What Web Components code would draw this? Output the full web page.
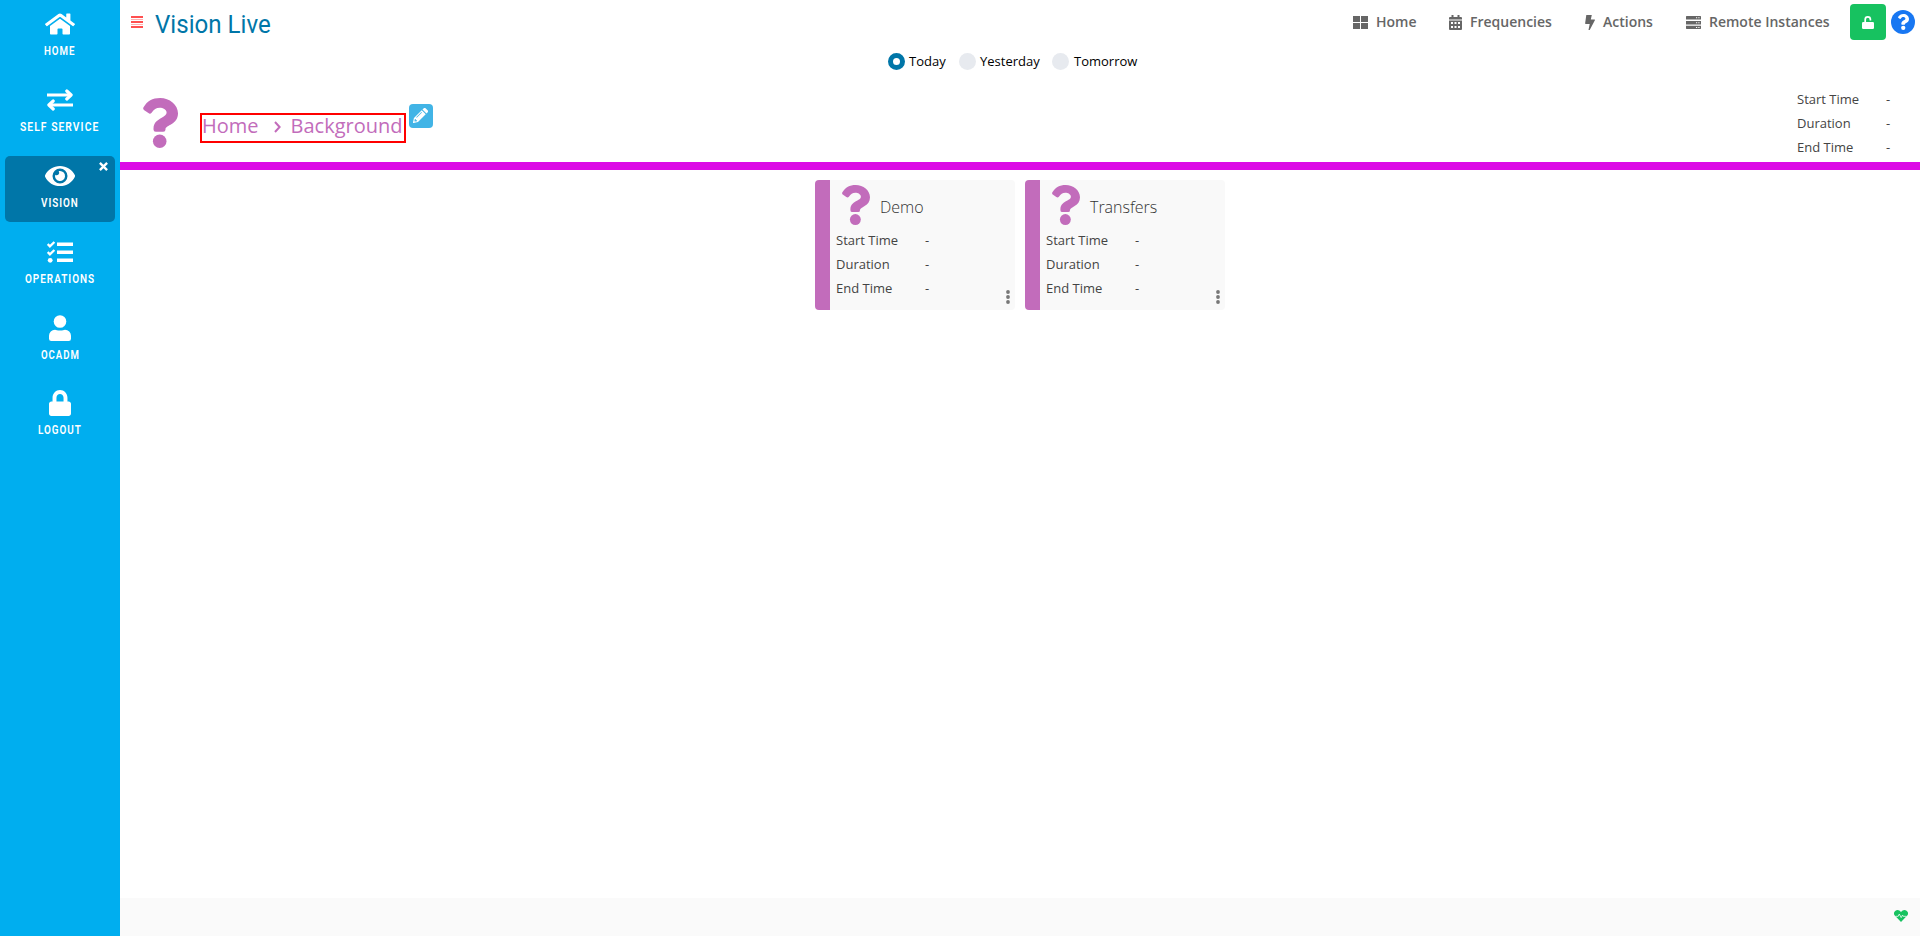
<!DOCTYPE html>
<html lang="en"><head><meta charset="utf-8"><title>Vision Live</title>
<style>html,body{margin:0;height:100%;overflow:hidden;background:#fff;font-family:"Open Sans",sans-serif}</style></head>
<body><app-shell></app-shell>
<script>
const ICONS = {
 home:['0 0 576 512','<path d="M280.37 148.26L96 300.11V464a16 16 0 0 0 16 16l112.06-.29a16 16 0 0 0 15.92-16V368a16 16 0 0 1 16-16h64a16 16 0 0 1 16 16v95.64a16 16 0 0 0 16 16.05L464 480a16 16 0 0 0 16-16V300L295.67 148.26a12.19 12.19 0 0 0-15.3 0zM571.6 251.47L488 182.56V44.05a12 12 0 0 0-12-12h-56a12 12 0 0 0-12 12v72.61L318.47 43a48 48 0 0 0-61 0L4.34 251.47a12 12 0 0 0-1.6 16.9l25.5 31A12 12 0 0 0 45.15 301l235.22-193.74a12.19 12.19 0 0 1 15.3 0L530.9 301a12 12 0 0 0 16.9-1.6l25.5-31a12 12 0 0 0-1.7-16.93z"/>'],
 swap:['0 0 26 22','<path fill="none" stroke="currentColor" stroke-width="3.2" d="M0 6h24M26 16H2"/><path fill="none" stroke="currentColor" stroke-width="3.2" stroke-linecap="round" stroke-linejoin="round" d="M19.8 2l4.3 4-4.3 4M6.2 12l-4.3 4 4.3 4"/>'],
 eye:['0 0 30 20','<path fill-rule="evenodd" d="M15 0C8.5 0 3 3.500.2 9.100a2 2 0 0 0 0 1.800C3 16.500 8.500 20 15 20s12-3.500 14.800-9.100a2 2 0 0 0 0-1.800C27 3.500 21.500 0 15 0zm0 2.500a7.500 7.500 0 1 1 0 15 7.500 7.500 0 0 1 0-15z"/><path d="M15 5c-.5 0-.9.050-1.300.2a2.500 2.500 0 0 1-3.500 3.500A5 5 0 1 0 15 5z"/>'],
 list:['0 0 26 22','<path d="M10 1.600h16v3.400H10zM10 9.600h16v3.400H10zM10 17.600h16V21H10z"/><circle cx="3.200" cy="19.300" r="2.400"/><path fill="none" stroke="currentColor" stroke-width="2.300" d="M.7 3.100l2.200 2.200L7.400 1M.7 11.100l2.200 2.200L7.400 9"/>'],
 user:['0 0 22 26','<circle cx="11" cy="6.500" r="6.300"/><path d="M6 14.700c1.500 0 2 .8 5 .8s3.500-.8 5-.8a6 6 0 0 1 6 6v3a2.300 2.300 0 0 1-2.300 2.300H2.300A2.300 2.300 0 0 1 0 23.700v-3a6 6 0 0 1 6-6z"/>'],
 lock:['0 0 448 512','<path d="M400 224h-24v-72C376 68.200 307.800 0 224 0S72 68.200 72 152v72H48c-26.500 0-48 21.500-48 48v192c0 26.500 21.500 48 48 48h352c26.500 0 48-21.500 48-48V272c0-26.500-21.500-48-48-48zm-104 0H152v-72c0-39.700 32.300-72 72-72s72 32.300 72 72v72z"/>'],
 close:['0 0 10 10','<path fill="none" stroke="currentColor" stroke-width="2.600" d="M1 1l8 8M9 1l-8 8"/>'],
 menu:['0 0 12 12','<path d="M0 0h12v2H0zM0 5h12v2H0zM0 10h12v2H0z"/><path opacity=".45" d="M0 3h12v1H0zM0 8h12v1H0z"/>'],
 grid:['0 0 15 13','<path d="M0 0h7v6H0zM8 0h7v6H8zM0 7h7v6H0zM8 7h7v6H8z"/>'],
 cal:['0 0 13 15','<path fill-rule="evenodd" d="M2.500 0h2v2h4V0h2v2H12a1 1 0 0 1 1 1v1.500H0V3a1 1 0 0 1 1-1h1.500zM0 5.500h13V14a1 1 0 0 1-1 1H1a1 1 0 0 1-1-1zM2 7v2h2V7zm3.500 0v2h2V7zM9 7v2h2V7zM2 11v2h2v-2zm3.500 0v2h2v-2zM9 11v2h2v-2z"/>'],
 bolt:['0 0 10 15','<path d="M1.300 0h5.500l-1 4.500H9.500a.5.500 0 0 1 .4.800L4.700 15H3.500l1.200-6H.6L.1 8.400z"/>'],
 server:['0 0 15 13','<path fill-rule="evenodd" d="M.5 0h14l.5.500v3H0V.5zM0 5h15v3.500H0zM0 9.800h15v2.700l-.5.500H.5l-.5-.5zM10 1.200v1h1.200v-1zm2.300 0v1h1.200v-1zM10 6.200v1h1.200v-1zm2.300 0v1h1.200v-1zM10 11v1h1.200v-1zm2.300 0v1h1.200v-1z"/>'],
 unlock:['0 0 12 13','<path fill="none" stroke="currentColor" stroke-width="1.700" d="M3.200 7V3.500a2.600 2.600 0 0 1 5.200 0v1"/><path d="M1.200 6h9.600A1.200 1.200 0 0 1 12 7.200v4.600a1.200 1.200 0 0 1-1.200 1.200H1.200A1.200 1.200 0 0 1 0 11.800V7.200A1.200 1.200 0 0 1 1.200 6z"/>'],
 q:['0 0 35 50','<path d="M.7 8.900C4.300 3.200 9.300 0 17.200 0 26.500 0 35 6.600 35 15.300c0 11.500-12.500 11.800-12.500 16v.2a2.300 2.300 0 0 1-2.300 2.300h-7.400a2.300 2.300 0 0 1-2.300-2.300V30.400c0-6.200 4.700-8.700 8.200-10.700 3-1.700 4.900-2.900 4.900-5.100 0-3-3.800-4.900-6.800-4.900-3.900 0-5.700 1.800-8.200 5a2.300 2.300 0 0 1-3.200.4L.9 11.900a2.300 2.300 0 0 1-.2-3z"/><circle cx="16.700" cy="43.200" r="6.800"/>'],
 chev:['0 0 7 12','<path fill="none" stroke="currentColor" stroke-width="2" d="M1 1l4.600 5L1 11"/>'],
 pencil:['0 0 16 16','<path fill-rule="evenodd" d="M9.300 2.400l4.300 4.300-8.300 8.300L.6 15.900a.5.500 0 0 1-.6-.6L1 10.700zM10.100 1.600L11.200.5a1.800 1.800 0 0 1 2.500 0l1.800 1.800a1.800 1.800 0 0 1 0 2.500L14.400 5.900zM9 4.300L3.400 9.900l.6.600L9.600 4.900zM2 11.700L1.500 14l.5.500 2.300-.5v-1H3v-1.300z"/>'],
 dots:['0 0 4 14','<circle cx="2" cy="2" r="1.900"/><circle cx="2" cy="7" r="1.900"/><circle cx="2" cy="12" r="1.900"/>'],
 heart:['0 0 14 12','<path d="M7 12L1 5.800A3.600 3.600 0 0 1 1.500.7C3.400-.6 5.600.2 7 2 8.400.2 10.600-.6 12.500.7A3.600 3.600 0 0 1 13 5.800z"/><path fill="none" stroke="#fafafa" stroke-width=".8" d="M1.500 6.300h2.700L5.300 4 7.200 7.600l1.300-2.500.7 1.200h3.300"/>']
};
class UiIcon extends HTMLElement{connectedCallback(){const [v,p]=ICONS[this.getAttribute('name')];
 this.attachShadow({mode:'open'}).innerHTML=`<style>:host{display:block;flex:none}svg{display:block;width:100%;height:100%}</style><svg viewBox="${v}" preserveAspectRatio="none" fill="currentColor">${p}</svg>`}}
customElements.define('ui-icon',UiIcon);
/* Condensed label: squeezes its text horizontally to the given width. */
class FitText extends HTMLElement{connectedCallback(){
 this.attachShadow({mode:'open'}).innerHTML=`<style>:host{display:block;white-space:nowrap;font-family:Roboto,sans-serif}span{display:inline-block;transform-origin:0 50%}</style><span><slot></slot></span>`;
 const w=+this.getAttribute('width'),s=this.shadowRoot.querySelector('span');this.style.width=w+'px';
 s.style.transform=`scaleX(${w/(s.offsetWidth-(parseFloat(getComputedStyle(this).letterSpacing)||0))})`}}
class NavItem extends HTMLElement{connectedCallback(){const g=n=>this.getAttribute(n);
 this.attachShadow({mode:'open'}).innerHTML=`<style>:host{display:flex;flex-direction:column;align-items:center;position:relative;height:66px;margin:0 5px;border-radius:5px;color:#fff}
 :host([active]){background:#0076a8}.i{height:40px;display:flex;align-items:center}fit-text{font-size:13px;font-weight:600;line-height:15px;letter-spacing:1.300px;margin:-1px 1.500px 0 0}.x{position:absolute;right:7px;top:6px;width:9px;height:9px}</style>
 <div class="i"><ui-icon name="${g('icon')}" style="width:${g('w')}px;height:${g('h')}px"></ui-icon></div><fit-text width="${g('tw')}">${g('label')}</fit-text>${this.hasAttribute('active')?'<ui-icon class="x" name="close"></ui-icon>':''}`}}
class SideBar extends HTMLElement{connectedCallback(){this.attachShadow({mode:'open'}).innerHTML=`<style>:host{width:120px;flex:none;background:#00aeef;display:flex;flex-direction:column;gap:9.800px;padding-top:4.400px;box-sizing:border-box}</style>
 <nav-item icon="home" w="30" h="24" tw="30.500" label="HOME"></nav-item><nav-item icon="swap" w="26" h="22" tw="78.500" label="SELF SERVICE"></nav-item><nav-item active icon="eye" w="30" h="20" tw="37" label="VISION"></nav-item><nav-item icon="list" w="26" h="22" tw="69.500" label="OPERATIONS"></nav-item><nav-item icon="user" w="22" h="26" tw="37.500" label="OCADM"></nav-item><nav-item icon="lock" w="22" h="26" tw="43" label="LOGOUT"></nav-item>`}}
class TopLink extends HTMLElement{connectedCallback(){this.attachShadow({mode:'open'}).innerHTML=`<style>:host{display:flex;align-items:center;gap:8px;color:#666;font:600 14px/20px "Open Sans",sans-serif;white-space:nowrap}</style><ui-icon name="${this.getAttribute('icon')}" style="width:${this.getAttribute('w')}px;height:${this.getAttribute('h')}px"></ui-icon><span><slot></slot></span>`}}
class TopBar extends HTMLElement{connectedCallback(){this.attachShadow({mode:'open'}).innerHTML=`<style>:host{display:flex;height:44px;align-items:center;box-sizing:border-box;padding:0 5px 0 11px}
 .m{width:12px;height:12px;color:#ff5050;margin-right:11.500px}fit-text{font-size:26.500px;line-height:32px;color:#0076a8;font-weight:400;margin-top:3px}nav{margin-left:auto;display:flex}
 .lock{width:36px;height:36px;border-radius:4px;background:#17c260;color:#fff;display:flex;align-items:center;justify-content:center;margin-left:21px}.lock ui-icon{width:12px;height:13px}.help{width:24px;height:24px;border-radius:50%;background:#1877f2;color:#fff;margin-left:5px;display:flex;align-items:center;justify-content:center}.help ui-icon{width:11px;height:16px}</style>
 <ui-icon class="m" name="menu"></ui-icon><fit-text width="115.500">Vision Live</fit-text>
 <nav><top-link icon="grid" w="15" h="13" style="width:96px">Home</top-link><top-link icon="cal" w="13" h="15" style="width:136px">Frequencies</top-link><top-link icon="bolt" w="10" h="15" style="width:101px">Actions</top-link><top-link icon="server" w="15" h="13" style="width:143px">Remote Instances</top-link></nav>
 <div class="lock"><ui-icon name="unlock"></ui-icon></div><div class="help"><ui-icon name="q"></ui-icon></div>`}}
class DayPicker extends HTMLElement{connectedCallback(){this.attachShadow({mode:'open'}).innerHTML=`<style>:host{display:flex;height:34px;align-items:center;padding-left:768px;color:#000;font-size:13px;line-height:18px}
 label{display:flex;align-items:center;gap:4px}i{width:17px;height:17px;border-radius:50%;background:#e7eaef}.on{box-sizing:border-box;background:#fff;border:5px solid #0076a8}</style>
 <label style="width:71px"><i class="on"></i>Today</label><label style="width:93px"><i></i>Yesterday</label><label style="gap:5px"><i></i>Tomorrow</label>`}}
class TimeFacts extends HTMLElement{connectedCallback(){this.attachShadow({mode:'open'}).innerHTML=`<style>:host{display:grid;grid-template-columns:89px 10px;font-size:13px;line-height:24px;color:#444}</style><span>Start Time</span><span>-</span><span>Duration</span><span>-</span><span>End Time</span><span>-</span>`}}
class PathHeader extends HTMLElement{connectedCallback(){this.attachShadow({mode:'open'}).innerHTML=`<style>:host{display:flex;height:92px;box-sizing:border-box;padding:9px 24px 0 23px;border-bottom:8px solid #dc0ae6;align-items:flex-start;color:#c26cbb}
 .q{width:35px;height:50px;margin:11px 22px 0 0}.path{box-sizing:border-box;width:206px;height:30px;margin-top:26px;border:2px solid #f00;display:flex;align-items:center;font-size:20px;line-height:24px;white-space:nowrap}.path ui-icon{width:7px;height:12px;margin:-3px 10px 0 15px}.path span{margin-top:-4px}
 .edit{width:24px;height:24px;border-radius:4px;background:#41b4e6;color:#fff;display:flex;align-items:center;justify-content:center;margin:17px 0 0 3px}.edit ui-icon{width:15px;height:15px;margin:-1px 1px 0 0}time-facts{margin:0 0 0 auto}</style>
 <ui-icon class="q" name="q"></ui-icon><div class="path"><span>Home</span><ui-icon name="chev"></ui-icon><span>Background</span></div><div class="edit"><ui-icon name="pencil"></ui-icon></div><time-facts></time-facts>`}}
class StatusCard extends HTMLElement{connectedCallback(){this.attachShadow({mode:'open'}).innerHTML=`<style>:host{display:block;position:relative;box-sizing:border-box;width:200px;height:130px;border-left:15px solid #c26cbb;border-radius:4px;background:#f9f9f9;padding:5px 0 0 6px}
 header{display:flex;height:43px;padding-left:6px}header ui-icon{width:28px;height:40px;color:#c26cbb;margin-right:10px}h2{margin:9px 0 0;font-weight:300;font-size:16px;line-height:26px;color:#333}.d{position:absolute;right:5.500px;bottom:6px;width:4px;height:14px;color:#777}</style>
 <header><ui-icon name="q"></ui-icon><h2><slot></slot></h2></header><time-facts></time-facts><ui-icon class="d" name="dots"></ui-icon>`}}
class AppShell extends HTMLElement{connectedCallback(){this.attachShadow({mode:'open'}).innerHTML=`<style>:host{display:flex;height:100vh}main{flex:1;display:flex;flex-direction:column;min-width:0}section{display:flex;justify-content:center;gap:10px;padding-top:10px;flex:1;align-items:flex-start}footer{height:38px;background:#fafafa;display:flex;align-items:center;justify-content:flex-end;padding-right:12px}footer ui-icon{width:14px;height:12px;color:#17c260;margin-top:-2px}</style>
 <side-bar></side-bar><main><top-bar></top-bar><day-picker></day-picker><path-header></path-header><section><status-card>Demo</status-card><status-card>Transfers</status-card></section><footer><ui-icon name="heart"></ui-icon></footer></main>`}}
Object.entries({'fit-text':FitText,'nav-item':NavItem,'side-bar':SideBar,'top-link':TopLink,'top-bar':TopBar,'day-picker':DayPicker,'time-facts':TimeFacts,'path-header':PathHeader,'status-card':StatusCard,'app-shell':AppShell}).forEach(([n,c])=>customElements.define(n,c));
</script></body></html>
